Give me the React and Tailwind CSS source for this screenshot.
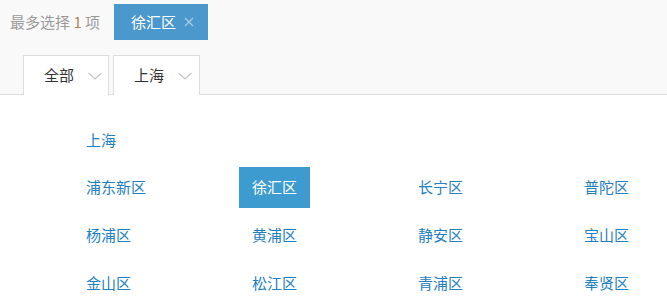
import React from "react";

const rows = [
  ["浦东新区", "徐汇区", "长宁区", "普陀区"],
  ["杨浦区", "黄浦区", "静安区", "宝山区"],
  ["金山区", "松江区", "青浦区", "奉贤区"],
];

const Chevron = () => (
  <svg width="16" height="10" viewBox="0 0 16 10" className="ml-[13px]">
    <path d="M1.5 2 L8 8 L14.5 2" fill="none" stroke="#c2c2c2" strokeWidth="1.1" />
  </svg>
);

const Tab = ({ label, width }) => (
  <div
    className={`flex h-[40px] items-center border border-b-0 border-[#dddddd] bg-white pl-[20px] text-[15px] text-[#333] -mb-px ${width}`}
  >
    <span>{label}</span>
    <Chevron />
  </div>
);

const App = () => {
  const selected = "徐汇区";

  return (
    <div className="h-[306px] w-[667px] overflow-hidden bg-white font-['Noto_Sans_CJK_SC','Noto_Sans',sans-serif]">
      <div className="h-[95px] border-b border-[#dddddd] bg-[#f9f9f9]">
        <div className="flex items-center pl-[10px] pt-[4px]">
          <span className="text-[15px] text-[#999]">
            最多选择 <span className="text-[#b5835a]">1</span> 项
          </span>
          <div className="ml-[14px] flex h-[36px] w-[94px] items-center bg-[#4b98cd] pl-[17px] text-[15px] text-white">
            <span>{selected}</span>
            <svg width="10" height="10" viewBox="0 0 10 10" className="ml-[8px]">
              <path d="M1 1 L9 9 M9 1 L1 9" stroke="#a9cbe6" strokeWidth="1.3" />
            </svg>
          </div>
        </div>
        <div className="mt-[15px] flex gap-[4px] pl-[23px]">
          <Tab label="全部" width="w-[86px]" />
          <Tab label="上海" width="w-[87px]" />
        </div>
      </div>

      <div className="pl-[73px] pt-[25px]">
        <div className="flex h-[41px] items-center px-[13px] text-[15px] text-[#2280c0]">
          上海
        </div>
        <div className="mt-[6px] grid grid-cols-[166px_166px_166px_166px] gap-y-[7px]">
          {rows.flat().map((name) => (
            <div key={name} className="flex">
              <span
                className={`flex h-[41px] items-center px-[13px] text-[15px] ${
                  name === selected
                    ? "bg-[#3e9bd0] text-white"
                    : "text-[#2280c0]"
                }`}
              >
                {name}
              </span>
            </div>
          ))}
        </div>
      </div>
    </div>
  );
};

export default App;
